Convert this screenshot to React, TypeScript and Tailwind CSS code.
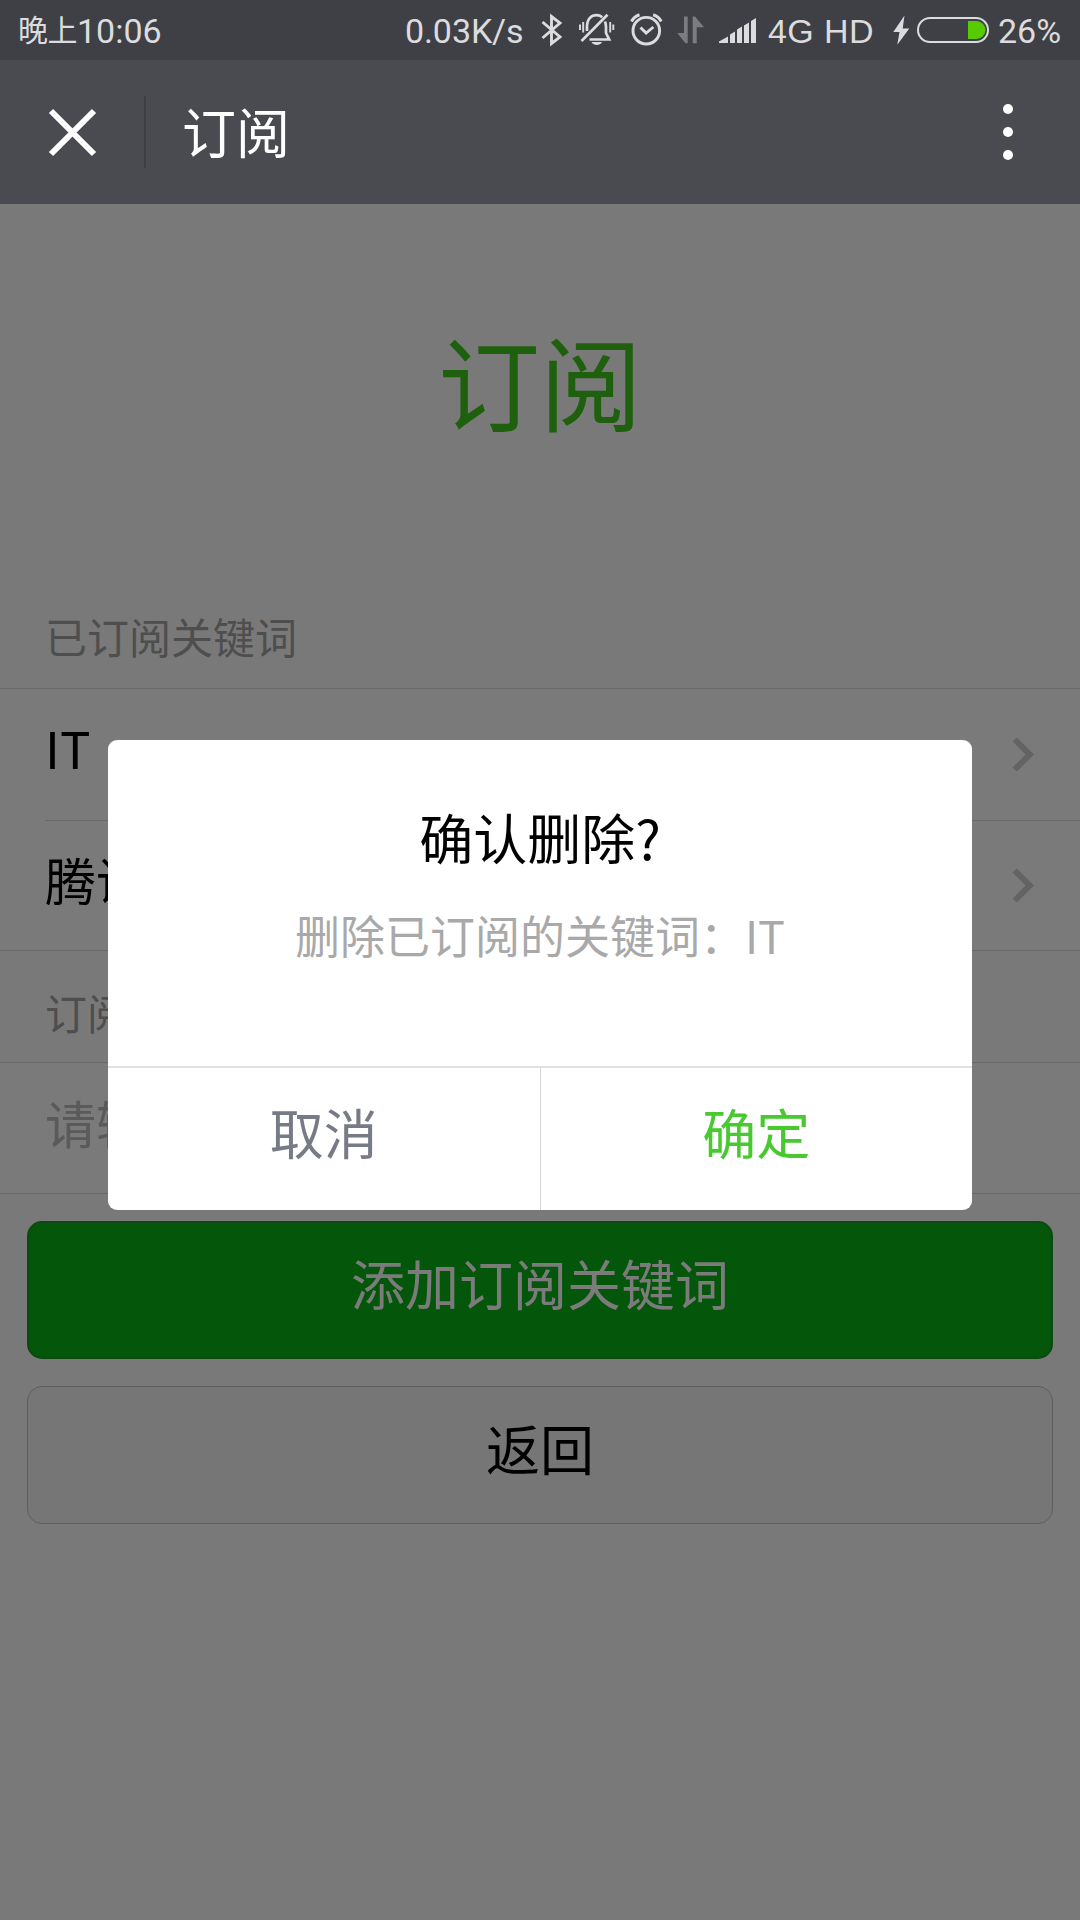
import type { ReactNode } from 'react';

const KEYWORDS = ['IT', '腾讯'];

function StatusBar() {
  return (
    <div className="flex h-[60px] items-center bg-[#3f4045] pl-[18px] font-[Roboto,'Noto_Sans_CJK_SC',sans-serif] text-[34px] leading-[60px] whitespace-nowrap text-[#dcdcde]">
      <span className="flex w-[387px] items-center pt-[2px]">
        <span className="text-[30px] tracking-[-0.5px]">晚上</span>
        <span>10:06</span>
      </span>
      <span className="w-[130px] pt-[2px] tracking-[-0.1px]">0.03K/s</span>

      {/* Bluetooth */}
      <svg width="40" height="60" fill="none" stroke="currentColor" strokeWidth="2.9">
        <path d="M7.500 22 25 37 16.500 43.500V16.500L25 23 7.500 38" />
      </svg>

      {/* Muted bell */}
      <svg width="50" height="60" fill="none" stroke="currentColor" strokeWidth="2.700">
        <path d="M12 31v-4c0-8 4-11.800 9.500-11.800 2.300 0 4.200.700 5.700 2M30 21.500c.700 1.800 1 3.500 1 5.500v6l3.200 6.500H14.500M6.500 41 32.500 14.700" />
        <path d="M16.500 42h10.500c-1.200 2.200-3 3-5.200 3s-4-.800-5.300-3z" fill="currentColor" stroke="none" />
        <path d="M5 24.500v5.500M8.200 22v10.500M35.200 22v10.500M38.300 24.500v5.500" strokeWidth="1.900" />
      </svg>

      {/* Alarm */}
      <svg width="47" height="60" fill="none" stroke="currentColor" strokeWidth="2.900">
        <circle cx="21.300" cy="30.700" r="13.300" />
        <path d="m15.500 27.500 5.600 5.500 7.300-6" />
        <path d="M6.500 21.500c1.500-3.200 4-5.500 8-6.800M28.200 14.700c4 1.300 6.500 3.600 8 6.800" strokeWidth="3" />
      </svg>

      {/* Data arrows */}
      <svg width="43" height="60" className="fill-[#7b7c7f]">
        <path d="M12 16.500h3.700v26.800h-2.200L5.300 33H12zM20.700 16.500H23l9 10.800h-7.300v16h-4z" />
      </svg>

      {/* Signal */}
      <svg width="51" height="60" fill="currentColor">
        <path d="M4 43v-1.500l9-5V43zM15 43v-8.500l5-3V43zM22 43V29.500l5-3V43zM29 43V25.500l5-3V43zM36 43V21l5-3v25z" />
      </svg>
      <span className="w-[124px] pt-[2px] pl-[2px] font-['Liberation_Sans',sans-serif] tracking-[0.4px]">4G HD</span>

      {/* Charging battery */}
      <svg width="23" height="60" fill="currentColor">
        <path d="M14.500 15.500 3.300 32h6.200L7.300 44.700l12-16.200h-6.600z" />
      </svg>
      <svg width="84" height="60" fill="none">
        <rect x="5" y="18" width="70" height="24" rx="12" stroke="#dcdcde" strokeWidth="2" />
        <path d="M55 21h8.500a9 9 0 0 1 0 18H55z" fill="#55cb00" />
      </svg>
      <span className="pt-[2px] pl-px text-[34px]">26%</span>
    </div>
  );
}

function NavBar() {
  return (
    <div className="flex h-36 items-center bg-[#4a4b50] text-white">
      <svg width="144" height="144" fill="none" stroke="currentColor" strokeWidth="6">
        <path d="m51 51 43 43M94 51 51 94" />
      </svg>
      <div className="h-[72px] w-[2px] bg-[#3d3e43]" />
      <h1 className="grow pb-[3px] pl-9 text-[54px] leading-[54px]">订阅</h1>
      <div className="mr-[67px] flex flex-col gap-[13px]">
        <i className="size-[10px] rounded-full bg-white" />
        <i className="size-[10px] rounded-full bg-white" />
        <i className="size-[10px] rounded-full bg-white" />
      </div>
    </div>
  );
}

function SectionTitle({ className, children }: { className: string; children: ReactNode }) {
  return <h3 className={`px-[45px] text-[42px] leading-[42px] text-[#4e4e4e] ${className}`}>{children}</h3>;
}

function KeywordList() {
  return (
    <ul className="flex h-[263px] flex-col border-y border-[#696969] bg-[#7a7a7a] pl-[45px]">
      {KEYWORDS.map((word) => (
        <li
          key={word}
          className="flex h-[132px] shrink-0 items-center justify-between border-b border-[#696969] last:h-[130px] last:border-b-0"
        >
          <span className="pb-[14px] text-[51px] leading-[51px] text-black">{word}</span>
          <svg width="70" height="40" fill="none" stroke="#636363" strokeWidth="6">
            <path d="m4.800 4.500 15 15-15 15" />
          </svg>
        </li>
      ))}
    </ul>
  );
}

function ConfirmDialog() {
  return (
    <div className="absolute top-[740px] left-[108px] flex h-[470px] w-[864px] flex-col rounded-[9px] bg-white text-center">
      <h2 className="pt-[70px] text-[54px] leading-[54px] text-black">确认删除?</h2>
      <p className="grow pt-[48px] text-[45px] leading-[45px] text-[#a9a9a9]">删除已订阅的关键词：IT</p>
      <div className="flex h-[144px] border-t-2 border-[#e0e0e0] text-[54px] leading-[54px]">
        <button className="flex-1 pb-[15px] text-[#777b85]">取消</button>
        <button className="flex-1 border-l border-[#d5d5d6] pb-[15px] text-[#48c92f]">确定</button>
      </div>
    </div>
  );
}

export default function App() {
  return (
    <div className="relative h-[1920px] w-[1080px] overflow-hidden bg-[#797979] font-['Noto_Sans_CJK_SC',sans-serif]">
      <StatusBar />
      <NavBar />

      <h2 className="pt-[125px] text-center text-[102px] leading-[102px] text-[#1f600f]">订阅</h2>
      <SectionTitle className="pt-[184px] pb-[31px]">已订阅关键词</SectionTitle>
      <KeywordList />
      <SectionTitle className="pt-[40px] pb-[29px]">订阅关键词</SectionTitle>
      <div className="flex h-[132px] items-center border-y border-[#696969] bg-[#7a7a7a] px-[45px]">
        <span className="pb-[12px] text-[51px] leading-[51px] text-[#5a5a5a]">请输入</span>
      </div>

      <div className="flex flex-col gap-[27px] px-[27px] pt-[27px] text-[54px] leading-[54px]">
        <button className="h-[138px] rounded-[15px] border-2 border-[#0c4a10] bg-[#04560a] pb-[15px] text-[#7b7b7b]">
          添加订阅关键词
        </button>
        <button className="h-[138px] rounded-[15px] border border-[#5f5f5f] bg-[#767676] pb-[15px] text-black">
          返回
        </button>
      </div>

      <ConfirmDialog />
    </div>
  );
}
